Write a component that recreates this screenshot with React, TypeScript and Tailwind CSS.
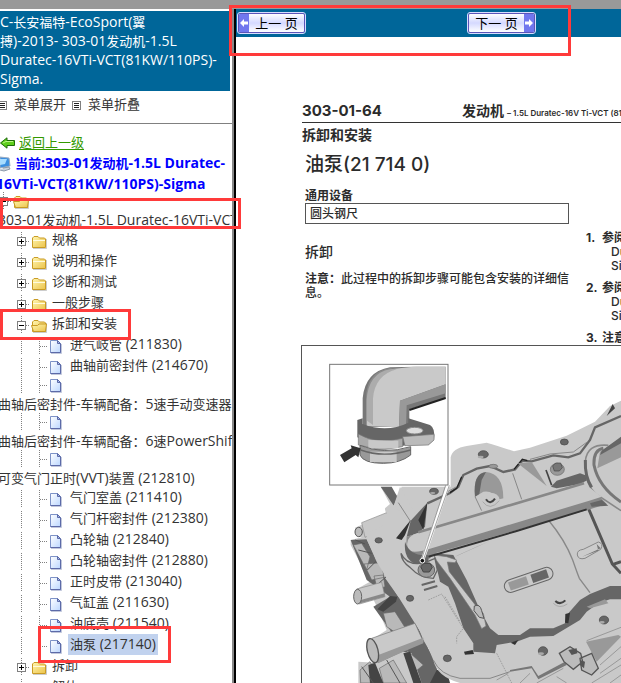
import type { ReactNode } from "react";

const sans = "font-['Open_Sans','Noto_Sans_CJK_SC',sans-serif]";
const docFont = "font-['Inter','Noto_Sans_CJK_SC',sans-serif]";

/* Latin runs are set one pixel larger than the Chinese text around them. */
function Mixed({ text }: { text: string }) {
  return text.split(/([\x20-\x7e]+)/).map((run, i) =>
    i % 2 ? (
      <span key={i} className="text-[14px] leading-none">
        {run}
      </span>
    ) : (
      run
    ),
  );
}

function Guide({ branch = false }: { branch?: boolean }) {
  return (
    <svg viewBox="0 0 18 18" className="h-[18px] w-[18px] shrink-0" aria-hidden="true">
      <path d="M9.5 0V18" stroke="#808080" strokeDasharray="1 1" />
      {branch && <path d="M10 9.5H18" stroke="#808080" strokeDasharray="1 1" />}
    </svg>
  );
}

function Toggle({ open, label }: { open: boolean; label: string }) {
  return (
    <button type="button" aria-label={label} aria-expanded={open} className="h-[18px] w-[18px] shrink-0">
      <svg viewBox="0 0 18 18" className="h-[18px] w-[18px]">
        <path d="M9.5 0V18M14 9.5H18" stroke="#808080" strokeDasharray="1 1" />
        <rect x="5.5" y="5.5" width="8" height="8" fill="#fff" stroke="#808080" />
        <path d="M7 9.5H12" stroke="#000" />
        {!open && <path d="M9.5 7V12" stroke="#000" />}
      </svg>
    </button>
  );
}

function Folder({ open = false }: { open?: boolean }) {
  return (
    <svg viewBox="0 0 18 18" className="h-[18px] w-[18px] shrink-0" aria-hidden="true">
      <defs>
        <linearGradient id="folder" x1="0" y1="0" x2="1" y2="1">
          <stop offset="0" stopColor="#fff6b0" />
          <stop offset="1" stopColor="#ecc34a" />
        </linearGradient>
      </defs>
      <path d="M3 16.500H16.500V7" fill="none" stroke="#aaa" opacity=".6" />
      <path d="M2.500 6L4 4.500H8L9.500 6H14.500L15.500 7V15.500H2.500Z" fill="url(#folder)" stroke="#c99b24" />
      {open ? (
        <path d="M3.500 15.500L1.500 9.500H7.500L9 8H16.500L15.500 15.500Z" fill="url(#folder)" stroke="#c99b24" />
      ) : (
        <path d="M3 8.500H15" stroke="#fffbe0" />
      )}
    </svg>
  );
}

function Doc() {
  return (
    <svg viewBox="0 0 18 18" className="h-[18px] w-[18px] shrink-0" aria-hidden="true">
      <defs>
        <linearGradient id="sheet" x1="0" y1="0" x2="1" y2="1">
          <stop offset="0" stopColor="#fff" />
          <stop offset="1" stopColor="#bcd7ff" />
        </linearGradient>
      </defs>
      <path d="M2.500 3.500H9.500L12.500 6.500V15.500H2.500Z" fill="url(#sheet)" stroke="#7d92c7" />
      <path d="M12.500 7V15.500H2.500" fill="none" stroke="#5c6aa8" />
      <path d="M9.500 3.500V6.500H12.500Z" fill="#a9bff0" stroke="#5c6aa8" />
      <path d="M3 16.500H13.500V7" fill="none" stroke="#9aa3c4" opacity=".6" />
    </svg>
  );
}

function Leaf({ text, selected = false }: { text: string; selected?: boolean }) {
  return (
    <li className="flex h-[21px] items-end pl-[18px]">
      <Guide />
      <Guide branch />
      <Doc />
      <a
        href="#item"
        className={selected ? "ml-0.5 h-[21px] bg-[#c1d2ee] px-0.5 leading-[21px]" : "ml-1 h-[21px] leading-[21px]"}
      >
        <Mixed text={text} />
      </a>
    </li>
  );
}

function WrappedLeaf({ text }: { text: string }) {
  return (
    <li>
      <div className="flex pl-[18px]">
        <Guide />
        <Guide branch />
        <Doc />
      </div>
      <a href="#item" className="ml-1 block h-[19px] leading-[21px]">
        <Mixed text={text} />
      </a>
    </li>
  );
}

function Branch({ label, open = false, children }: { label: string; open?: boolean; children?: ReactNode }) {
  return (
    <li>
      <div className="flex h-[21px] items-end pl-[18px]">
        <Toggle open={open} label={label} />
        <Folder open={open} />
        <a href="#branch" className="ml-1 leading-[21px]">
          {label}
        </a>
      </div>
      {children && <ul>{children}</ul>}
    </li>
  );
}

function MenuGlyph() {
  return (
    <svg viewBox="0 0 9 9" className="h-[9px] w-[9px] shrink-0" aria-hidden="true">
      <rect x=".5" y=".5" width="8" height="8" fill="#fff" stroke="#808080" />
      <path d="M2 2.500H7M2 4.500H7M2 6.500H7" stroke="#222" />
    </svg>
  );
}

function Sidebar() {
  return (
    <aside className={`${sans} w-[232px] shrink-0 overflow-hidden whitespace-nowrap pt-0.5 text-[13px] text-[#333]`}>
      <h1 className="mr-0.5 h-20 bg-[#006699] pt-0.5 leading-[19px] text-white">
        <Mixed text="C-长安福特-EcoSport(翼" />
        <br />
        <Mixed text="搏)-2013- 303-01发动机-1.5L" />
        <br />
        <Mixed text="Duratec-16VTi-VCT(81KW/110PS)-" />
        <br />
        <Mixed text="Sigma." />
      </h1>
      <div className="-ml-0.5 flex h-[33px] items-center border-b border-[#808080] pb-1">
        <button type="button" className="flex items-center gap-[7px]">
          <MenuGlyph />
          菜单展开
        </button>
        <button type="button" className="ml-[6px] flex items-center gap-[7px]">
          <MenuGlyph />
          菜单折叠
        </button>
      </div>
      <div className="mt-[9px] flex h-5 items-center gap-1">
        <svg viewBox="0 0 15 12" className="h-3 w-[15px]" aria-hidden="true">
          <path d="M.5 6L7 .800V3.500H14.500V8.500H7V11.200Z" fill="#5fce1c" stroke="#1d6b08" />
          <path d="M3 6L6 4.500H13" fill="none" stroke="#b9f584" />
        </svg>
        <a href="#up" className="text-[#339900] underline underline-offset-2">
          返回上一级
        </a>
      </div>
      <div className="font-bold leading-[21px] text-[#0000ff]">
        <div className="flex h-[21px] items-center gap-1">
          <svg viewBox="0 0 11 16" className="h-4 w-[11px]" aria-hidden="true">
            <path d="M0 1L9 2L10 10L0 12Z" fill="#3c8fe0" stroke="#9aabc0" />
            <path d="M0 3L7 3L5 8L0 9Z" fill="#a8dcff" />
            <path d="M3 12L9 11L10 13L4 15L0 14" fill="#ccd3dc" stroke="#8b98a8" />
          </svg>
          <span>
            <Mixed text="当前:303-01发动机-1.5L Duratec-" />
          </span>
        </div>
        <div className="-ml-1 h-[18px]">
          <Mixed text="16VTi-VCT(81KW/110PS)-Sigma" />
        </div>
      </div>
      <nav aria-label="目录" className="-ml-1.5">
        <div className="flex h-[18px]">
          <Toggle open label="303-01发动机" />
          <Folder open />
        </div>
        <a href="#root" className="ml-1 block h-[19px] leading-[21px]">
          <Mixed text="303-01发动机-1.5L Duratec-16VTi-VCT" />
        </a>
        <ul>
          <Branch label="规格" />
          <Branch label="说明和操作" />
          <Branch label="诊断和测试" />
          <Branch label="一般步骤" />
          <Branch label="拆卸和安装" open>
            <Leaf text="进气岐管 (211830)" />
            <Leaf text="曲轴前密封件 (214670)" />
            <WrappedLeaf text="曲轴后密封件-车辆配备：5速手动变速器" />
            <WrappedLeaf text="曲轴后密封件-车辆配备：6速PowerShift" />
            <WrappedLeaf text="可变气门正时(VVT)装置 (212810)" />
            <Leaf text="气门室盖 (211410)" />
            <Leaf text="气门杆密封件 (212380)" />
            <Leaf text="凸轮轴 (212840)" />
            <Leaf text="凸轮轴密封件 (212880)" />
            <Leaf text="正时皮带 (213040)" />
            <Leaf text="气缸盖 (211630)" />
            <Leaf text="油底壳 (211540)" />
            <Leaf text="油泵 (217140)" selected />
          </Branch>
          <Branch label="拆卸" />
          <Branch label="解体" />
        </ul>
      </nav>
    </aside>
  );
}

function Arrow({ next = false }: { next?: boolean }) {
  return (
    <span className="flex w-[10px] shrink-0 items-center justify-center bg-[#7177ee]">
      <svg viewBox="0 0 8 8" className="h-2 w-2" aria-hidden="true">
        <path d={next ? "M8 4L4 0V2.500H0V5.500H4V8Z" : "M0 4L4 0V2.500H8V5.500H4V8Z"} fill="#fff" />
      </svg>
    </span>
  );
}

const pagerButton =
  "flex h-5 w-[67px] overflow-hidden rounded-xs border border-[#5b55b8] bg-linear-to-b from-white via-[#d5d9ff] to-white text-[13px] leading-[18px] text-black outline outline-[#d9dcff]";

function Engine() {
  return (
    <svg viewBox="36 18 957 1011" className="block h-[337px] w-[319px]" role="img" aria-label="油泵安装位置">
      {/* left accessories */}
      <path d="M272 440L390 500L420 1029H205V965L255 968L228 930L234 906L290 870L265 810L250 778L205 790L190 770L195 750L240 725L182 615V600L215 592L195 580V563L288 522L285 505L300 492Z" fill="#c9c9c9" />
      <path d="M272 440H305L332 488L312 498ZM182 600L230 598L250 640L275 700L325 770L360 800L400 900L435 960L450 1029H395L365 940L340 935L300 870L250 800L300 770L230 720Z" fill="#666" />
      <path d="M190 615L215 610L240 650L230 690ZM222 672L275 668L282 712L245 720ZM252 708L280 705L285 740L262 748ZM280 820L315 815L350 870L320 880L290 860ZM350 930L400 975L370 1000ZM268 985L310 960L350 1029H280ZM210 990L240 965L275 1029H212Z" fill="#b9b9b9" stroke="#666" strokeWidth="2" />
      <path d="M262 808L300 768L322 770L318 785L280 815ZM240 1029L235 975L255 968L280 1029ZM340 940L360 935L395 1029H370ZM420 1029L440 990H470L480 1029Z" fill="#444" />
      <path d="M196 600L225 612M205 630L245 640M232 690L262 660M255 740L300 700M215 980L250 1029M290 960L330 1029" stroke="#555" strokeWidth="3" />
      <path d="M215 548L290 518L310 555L225 592Z" fill="#c9c9c9" stroke="#888" strokeWidth="2" />
      <ellipse cx="206" cy="576" rx="11" ry="14" fill="#bbb" stroke="#555" strokeWidth="3" />
      <path d="M200 747L275 727L285 770L208 792Z" fill="#c9c9c9" stroke="#888" strokeWidth="2" />
      <path d="M210 790L284 770V760L205 782Z" fill="#888" />
      <ellipse cx="203" cy="770" rx="12" ry="22" fill="#bbb" stroke="#666" strokeWidth="3" />

      {/* engine block */}
      <path d="M312 495L335 440H482V352Q487 325 530 318L590 308Q625 318 672 334L720 323L830 287L915 245L960 198L993 182V1029H510Q440 1010 430 960L400 890L325 770L260 665L230 598V577Q260 570 290 552V520L285 507Z" fill="#c9c9c9" />
      <path d="M312 495L330 440L380 530L360 545Z" fill="#c9c9c9" />
      <path d="M412 490L480 459L505 440L520 405L560 386L600 378L640 396L675 388L697 362L725 364L790 346L835 352L870 340L900 300L915 262L993 228" fill="none" stroke="#666" strokeWidth="7" />
      <path d="M672 388L697 358L712 362M480 458L500 445L515 410" fill="none" stroke="#222" strokeWidth="4" />
      <path d="M720 358L780 342L850 336L893 305M460 462L500 440" fill="none" stroke="#888" strokeWidth="3" />
      <path d="M968 192L975 205L950 228Z" fill="#444" />
      <ellipse cx="610" cy="379" rx="13" ry="6" fill="#999" stroke="#666" strokeWidth="2" />
      <path d="M683 370L725 366L770 438Z" fill="#999" />
      <path d="M555 470Q548 400 588 396Q640 400 640 475L620 480Q610 450 580 455Z" fill="#999" />
      <path d="M555 470Q548 400 588 396L575 420L568 462Z" fill="#666" />
      <path d="M668 400L695 478M555 470L575 512M325 488L362 545" fill="none" stroke="#888" strokeWidth="3" />
      <path d="M362 542L412 488L405 560L385 580L350 590Z" fill="#666" />
      <path d="M318 595L362 540L345 585L335 600ZM385 540L412 488L400 570Z" fill="#333" />
      <path d="M783 440L800 422L870 400L893 408V420L870 432L800 445Z" fill="#666" />
      <path d="M768 390L785 436" stroke="#444" strokeWidth="5" />

      {/* oil pan */}
      <path d="M430 640L490 645L530 720L570 810L600 865L625 885H690L720 865L790 865L825 850L835 820L870 780L900 762L960 738H993V778H960L925 790L890 815L870 840L820 870L790 888L720 890L680 905L620 915L615 940L550 935V910L520 865L495 790L475 740L450 725Z" fill="#666" />
      <path d="M432 645L470 650L500 660L495 668L472 666L478 695L560 800L580 820L588 858L575 866L555 825L480 715L440 662Z" fill="#c9c9c9" stroke="#777" strokeWidth="2" />
      <path d="M553 798Q570 790 575 812L582 835L568 832L552 812Z" fill="#bbb" stroke="#555" strokeWidth="3" />
      <path d="M522 935L548 930L552 942L525 944ZM662 908L685 900L675 915ZM826 822L840 818L835 850L825 848Z" fill="#333" />
      <path d="M890 800L945 778L955 790L900 805Z" fill="#999" />
      <path d="M495 650L600 603L560 620L505 645Z" fill="#888" />
      <path d="M775 540Q825 600 848 660Q862 700 868 715L900 758" fill="none" stroke="#888" strokeWidth="4" />
      <path d="M893 500L967 672L993 700M967 674L993 665" fill="none" stroke="#555" strokeWidth="9" />
      <path d="M905 502L970 662L993 655V515L930 490Z" fill="#c9c9c9" />

      {/* pickup ring */}
      <path d="M993 290Q940 305 900 325Q870 370 905 440L993 515Z" fill="#c9c9c9" />
      <path d="M955 316Q890 310 886 365Q884 430 915 460L993 512" fill="none" stroke="#888" strokeWidth="5" />
      <path d="M886 360Q884 410 905 442" fill="none" stroke="#666" strokeWidth="9" />
      <path d="M940 325Q910 330 912 375Q925 440 993 486" fill="none" stroke="#777" strokeWidth="9" />
      <path d="M993 293L930 335L922 385L993 352Z" fill="#999" />
      <path d="M993 290L935 332L930 345L993 310Z" fill="#666" />

      {/* oil pipe */}
      <path d="M350 590Q345 665 375 672L405 668L435 640L900 508L950 492L905 445L880 435L400 575Z" fill="#888" />
      <path d="M355 630Q340 590 385 578L882 430L935 470L905 480L420 626Q370 642 355 630Z" fill="#c9c9c9" />
      <path d="M385 577L882 430" stroke="#888" strokeWidth="8" />
      <path d="M415 650L680 573L890 508" fill="none" stroke="#333" strokeWidth="6" />
      <path d="M900 490L935 480L955 497L905 500Z" fill="#666" />
      <path d="M345 605Q340 660 380 672L415 665V645Q360 650 345 605Z" fill="#666" />
      <path d="M333 640Q335 665 360 682Q390 715 430 715L442 690L435 655L405 668Q350 680 333 640Z" fill="#c9c9c9" stroke="#666" strokeWidth="4" />
      <ellipse cx="409" cy="690" rx="25" ry="22" fill="#999" stroke="#666" strokeWidth="3" />
      <path d="M392 680L402 670H420L427 682L418 696H400Z" fill="#666" stroke="#444" strokeWidth="3" />
      <path d="M395 735L435 724M402 750L442 738" stroke="#666" strokeWidth="6" />
      <path d="M415 780L455 762L520 865L500 890V910M620 940L665 1029M465 770L510 845" fill="none" stroke="#888" strokeWidth="2" strokeDasharray="5 3" />

      {/* slots */}
      <g transform="rotate(-19 715 720)" stroke="#666" strokeWidth="3">
        <rect x="640" y="701" width="152" height="38" rx="19" fill="#c9c9c9" />
        <rect x="655" y="707" width="57" height="26" fill="#999" stroke="none" />
        <rect x="726" y="707" width="50" height="26" fill="#666" stroke="none" />
      </g>
      <path d="M862 645Q860 630 880 628L925 606Q942 610 932 628L885 655Q865 660 862 645Z" fill="#ccc" stroke="#888" strokeWidth="3" />
      <path d="M876 650L925 632L920 612L932 625Z" fill="#777" />

      {/* bolt holes */}
      <g fill="#666" stroke="#444" strokeWidth="2">
        <ellipse cx="266" cy="601" rx="11" ry="8" />
        <ellipse cx="360" cy="775" rx="11" ry="9" />
        <ellipse cx="472" cy="955" rx="12" ry="10" />
        <ellipse cx="432" cy="454" rx="13" ry="9" />
        <ellipse cx="580" cy="343" rx="15" ry="11" />
        <ellipse cx="823" cy="306" rx="12" ry="9" />
        <ellipse cx="759" cy="933" rx="14" ry="13" />
        <ellipse cx="942" cy="840" rx="14" ry="12" />
      </g>
      <g fill="#aaa">
        <ellipse cx="572" cy="351" rx="9" ry="4" />
        <ellipse cx="428" cy="459" rx="8" ry="3" />
        <ellipse cx="753" cy="941" rx="9" ry="4" />
        <ellipse cx="936" cy="847" rx="8" ry="4" />
      </g>
      <ellipse cx="802" cy="388" rx="21" ry="18" fill="#999" stroke="#666" strokeWidth="2" />
      <path d="M788 378L797 369H812L817 383L808 393H793Z" fill="#777" stroke="#444" strokeWidth="2" />
      <ellipse cx="601" cy="480" rx="28" ry="22" fill="#c9c9c9" />
      <path d="M588 478Q600 497 615 476M796 783Q810 797 826 781" fill="none" stroke="#444" strokeWidth="6" />
      <path d="M578 485Q600 515 628 482M790 790Q808 808 832 792" fill="none" stroke="#999" strokeWidth="2" />

      {/* lower right */}
      <path d="M660 995L725 985L745 1018L830 975L825 965L745 1008L725 978L660 990Z" fill="#777" />
      <path d="M888 905L985 885L993 890L920 965Z" fill="#999" />
      <path d="M890 902L993 862M740 1029L820 985M930 975L993 920M930 1000L993 955M905 1029L993 975M690 1029L720 1000M620 1020L655 1000M800 1010L830 1029M960 1029L993 1005" fill="none" stroke="#999" strokeWidth="3" />
      <path d="M808 940L840 920L872 940L878 965L850 988L822 965ZM870 955L905 940L925 985L905 1005L875 990Z" fill="#bbb" stroke="#555" strokeWidth="4" />
      <path d="M835 930L860 925L862 940L845 945ZM870 960L885 965L882 985L870 975Z" fill="#555" />
      <path d="M430 960Q450 1005 510 1015H600L660 995" fill="none" stroke="#888" strokeWidth="3" />

      {/* dowel tube */}
      <path d="M245 895L375 850L400 905L265 968Z" fill="#c9c9c9" stroke="#777" strokeWidth="2" />
      <path d="M262 968L400 910V893L265 945Z" fill="#999" />
      <ellipse cx="248" cy="932" rx="16" ry="37" transform="rotate(-14 248 932)" fill="#bbb" stroke="#555" strokeWidth="4" />

      {/* callout */}
      <path d="M474 436L397 662" stroke="#fff" strokeWidth="11" />
      <path d="M467 436L394 660M478 436L400 660" stroke="#777" strokeWidth="2" />
      <circle cx="397" cy="662" r="7" fill="#111" stroke="#fff" strokeWidth="3" />

      {/* inset */}
      <rect x="119" y="73" width="355" height="362" fill="#fff" stroke="#777" strokeWidth="3" />
      <path d="M218 260V175Q225 95 300 82L380 80H467V175L358 208V262Z" fill="#777" />
      <path d="M230 258V180Q235 100 300 88L370 80H467V133L330 182L327 262Z" fill="#c9c9c9" />
      <path d="M249 255V175Q255 105 320 88L300 84Q230 95 228 175V240Z" fill="#999" opacity=".6" />
      <path d="M330 182L467 133V160L350 196L348 262H327Z" fill="#999" />
      <path d="M358 210L467 174" stroke="#222" strokeWidth="6" />
      <path d="M202 240L218 235V252Q290 280 355 248V235L420 255Q437 265 432 300L415 315L350 316Q270 330 202 292Z" fill="#666" />
      <path d="M338 290L432 283V300L415 315L345 317Z" fill="#bbb" stroke="#777" strokeWidth="2" />
      <path d="M205 282Q260 315 338 295V320L275 330L205 315Z" fill="#aaa" stroke="#777" strokeWidth="2" />
      <path d="M235 300L325 302V325H235Z" fill="#c9c9c9" />
      <ellipse cx="374" cy="272" rx="25" ry="10" fill="#ddd" stroke="#888" strokeWidth="3" />
      <path d="M210 316Q280 345 362 320V345Q330 370 280 370Q220 370 210 345Z" fill="#999" stroke="#666" strokeWidth="3" />
      <path d="M240 335H320V366H240Z" fill="#c9c9c9" />
      <path d="M212 330Q280 355 362 330" fill="none" stroke="#666" strokeWidth="4" />
      <path d="M150 345L185 325L182 316L212 325L205 352L197 345L163 367Z" fill="#333" />
    </svg>
  );
}

function Step({ n, children }: { n: string; children: ReactNode }) {
  return (
    <li className="flex gap-[5px]">
      <span className="w-[11px] shrink-0 font-bold">{n}</span>
      <div>{children}</div>
    </li>
  );
}

function Manual() {
  return (
    <article
      className={`${docFont} overflow-hidden whitespace-nowrap pl-[65px] pt-[62px] text-xs leading-[14px] text-[#2b2b2b]`}
    >
      <header className="ml-px flex h-6 items-center border-b border-[#333]">
        <span className="w-40 shrink-0 text-[15px] font-bold">303-01-64</span>
        <span className="text-sm font-bold">发动机</span>
        <span className="ml-[3px] pt-1 text-[8px] font-semibold">– 1.5L Duratec-16V Ti-VCT (81KW</span>
      </header>
      <h2 className="ml-px mt-[3px] text-sm font-bold leading-[18px]">拆卸和安装</h2>
      <div className="flex h-[201px] pl-1">
        <div className="w-[264px] shrink-0">
          <h3 className="mt-2 text-[19px] font-medium leading-[26px]">油泵(21 714 0)</h3>
          <h4 className="mt-[11px] font-bold">通用设备</h4>
          <div className="border border-[#555] pl-1 font-medium leading-[19px]">圆头钢尺</div>
          <h4 className="mt-[18px] text-sm font-medium leading-5">拆卸</h4>
          <p className="mt-[10px] font-medium">
            <b>注意：</b>此过程中的拆卸步骤可能包含安装的详细信
            <br />
            息。
          </p>
        </div>
        <ol className="ml-[17px] flex flex-col gap-2 pt-[87px] font-medium">
          <Step n="1.">
            <b>参阅</b>
            <div className="pl-[9px]">Duratec</div>
            <div className="pl-[9px]">Sigma</div>
          </Step>
          <Step n="2.">
            <b>参阅</b>
            <div className="pl-[9px]">Duratec</div>
            <div className="pl-[9px]">Sigma</div>
          </Step>
          <Step n="3.">
            <b>注意</b>
          </Step>
        </ol>
      </div>
      <figure className="border-l border-t border-[#555]">
        <Engine />
      </figure>
    </article>
  );
}

export default function App() {
  return (
    <div className="relative flex h-screen flex-col overflow-hidden bg-white">
      <div className="h-[9px] shrink-0 bg-[#999]" />
      <div className="flex min-h-0 grow">
        <Sidebar />
        <div className="w-1 shrink-0 border-l-2 border-[#888] bg-black" />
        <main className="min-w-0 grow">
          <div className={`${sans} flex h-7 items-center gap-[163px] bg-[#006699] pl-0.5`}>
            <button type="button" className={pagerButton}>
              <Arrow />
              <span className="grow text-center">上一 页</span>
            </button>
            <button type="button" className={pagerButton}>
              <span className="grow text-center">下一 页</span>
              <Arrow next />
            </button>
          </div>
          <Manual />
        </main>
      </div>
      <div className="pointer-events-none absolute left-[229px] top-[5px] h-[51px] w-[342px] border-3 border-[#ff3a3a]" />
      <div className="pointer-events-none absolute left-0 top-[198px] h-[31px] w-[241px] border-3 border-[#ff3a3a]" />
      <div className="pointer-events-none absolute left-0 top-[309px] h-[31px] w-[131px] border-3 border-[#ff3a3a]" />
      <div className="pointer-events-none absolute left-[38px] top-[626px] h-[37px] w-[133px] border-3 border-[#ff3a3a]" />
    </div>
  );
}
